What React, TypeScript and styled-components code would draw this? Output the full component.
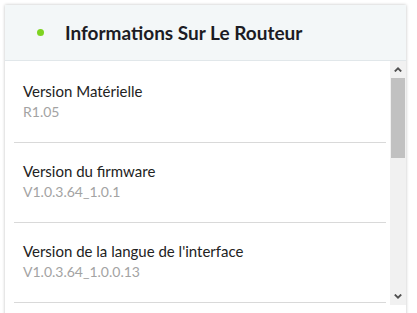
import React from "react";
import styled, { createGlobalStyle } from "styled-components";

const Global = createGlobalStyle`
  html, body { margin: 0; padding: 0; background: #ffffff; }
  body { font-family: Lato, "Open Sans", sans-serif; overflow: hidden; }
  * { box-sizing: border-box; }
`;

const Page = styled.div`
  padding: 5px 11px 0 5px;
  height: 313px;
`;

const Card = styled.section`
  background: #ffffff;
  box-shadow: 0 0 3px rgba(0, 0, 0, 0.25);
  height: 320px;
  display: flex;
  flex-direction: column;
`;

const Header = styled.header`
  height: 56px;
  flex: none;
  background: #f3f7f8;
  border-bottom: 1px solid #e1e7ea;
  display: flex;
  align-items: center;
  padding-left: 32px;
  gap: 21px;
`;

const Dot = styled.span`
  width: 7px;
  height: 7px;
  border-radius: 50%;
  background: #7ed321;
  flex: none;
`;

const Title = styled.h2`
  margin: 0;
  font-size: 19px;
  font-weight: 700;
  color: #1c1c24;
`;

const Body = styled.div`
  height: 244px;
  flex: none;
  display: flex;
`;

const List = styled.ul`
  list-style: none;
  margin: 0;
  padding: 2px 4px 0 9px;
  flex: 1;
  overflow: hidden;
`;

const Row = styled.li`
  height: 80px;
  border-bottom: 1px solid #d9d9d9;
  padding: 18px 0 0 9px;
  display: flex;
  flex-direction: column;
  gap: 1px;
`;

const Label = styled.div`
  font-size: 15px;
  color: #222222;
  line-height: 20px;
`;

const Value = styled.div`
  font-size: 14px;
  color: #a3a3a3;
  line-height: 19px;
`;

const ScrollBar = styled.div`
  width: 16px;
  flex: none;
  background: #f1f1f1;
  display: flex;
  flex-direction: column;
`;

const ScrollButton = styled.div`
  height: 17px;
  flex: none;
  display: flex;
  align-items: center;
  justify-content: center;
`;

const Track = styled.div`
  flex: 1;
  padding: 0 1px;
`;

const Thumb = styled.div`
  height: 80px;
  background: #c1c1c1;
`;

const Chevron = ({ up }: { up?: boolean }) => (
  <svg width="8" height="5" viewBox="0 0 8 5">
    <path
      d={up ? "M0.8 4.5 L4 1.3 L7.2 4.5" : "M0.8 0.5 L4 3.7 L7.2 0.5"}
      fill="none"
      stroke="#505050"
      strokeWidth="1.8"
    />
  </svg>
);

const items: [string, string][] = [
  ["Version Matérielle", "R1.05"],
  ["Version du firmware", "V1.0.3.64_1.0.1"],
  ["Version de la langue de l'interface", "V1.0.3.64_1.0.0.13"],
];

export default function App() {
  return (
    <>
      <Global />
      <Page>
        <Card>
          <Header>
            <Dot />
            <Title>Informations Sur Le Routeur</Title>
          </Header>
          <Body>
            <List>
              {items.map(([l, v]) => (
                <Row key={l}>
                  <Label>{l}</Label>
                  <Value>{v}</Value>
                </Row>
              ))}
            </List>
            <ScrollBar>
              <ScrollButton>
                <Chevron up />
              </ScrollButton>
              <Track>
                <Thumb />
              </Track>
              <ScrollButton>
                <Chevron />
              </ScrollButton>
            </ScrollBar>
          </Body>
        </Card>
      </Page>
    </>
  );
}
